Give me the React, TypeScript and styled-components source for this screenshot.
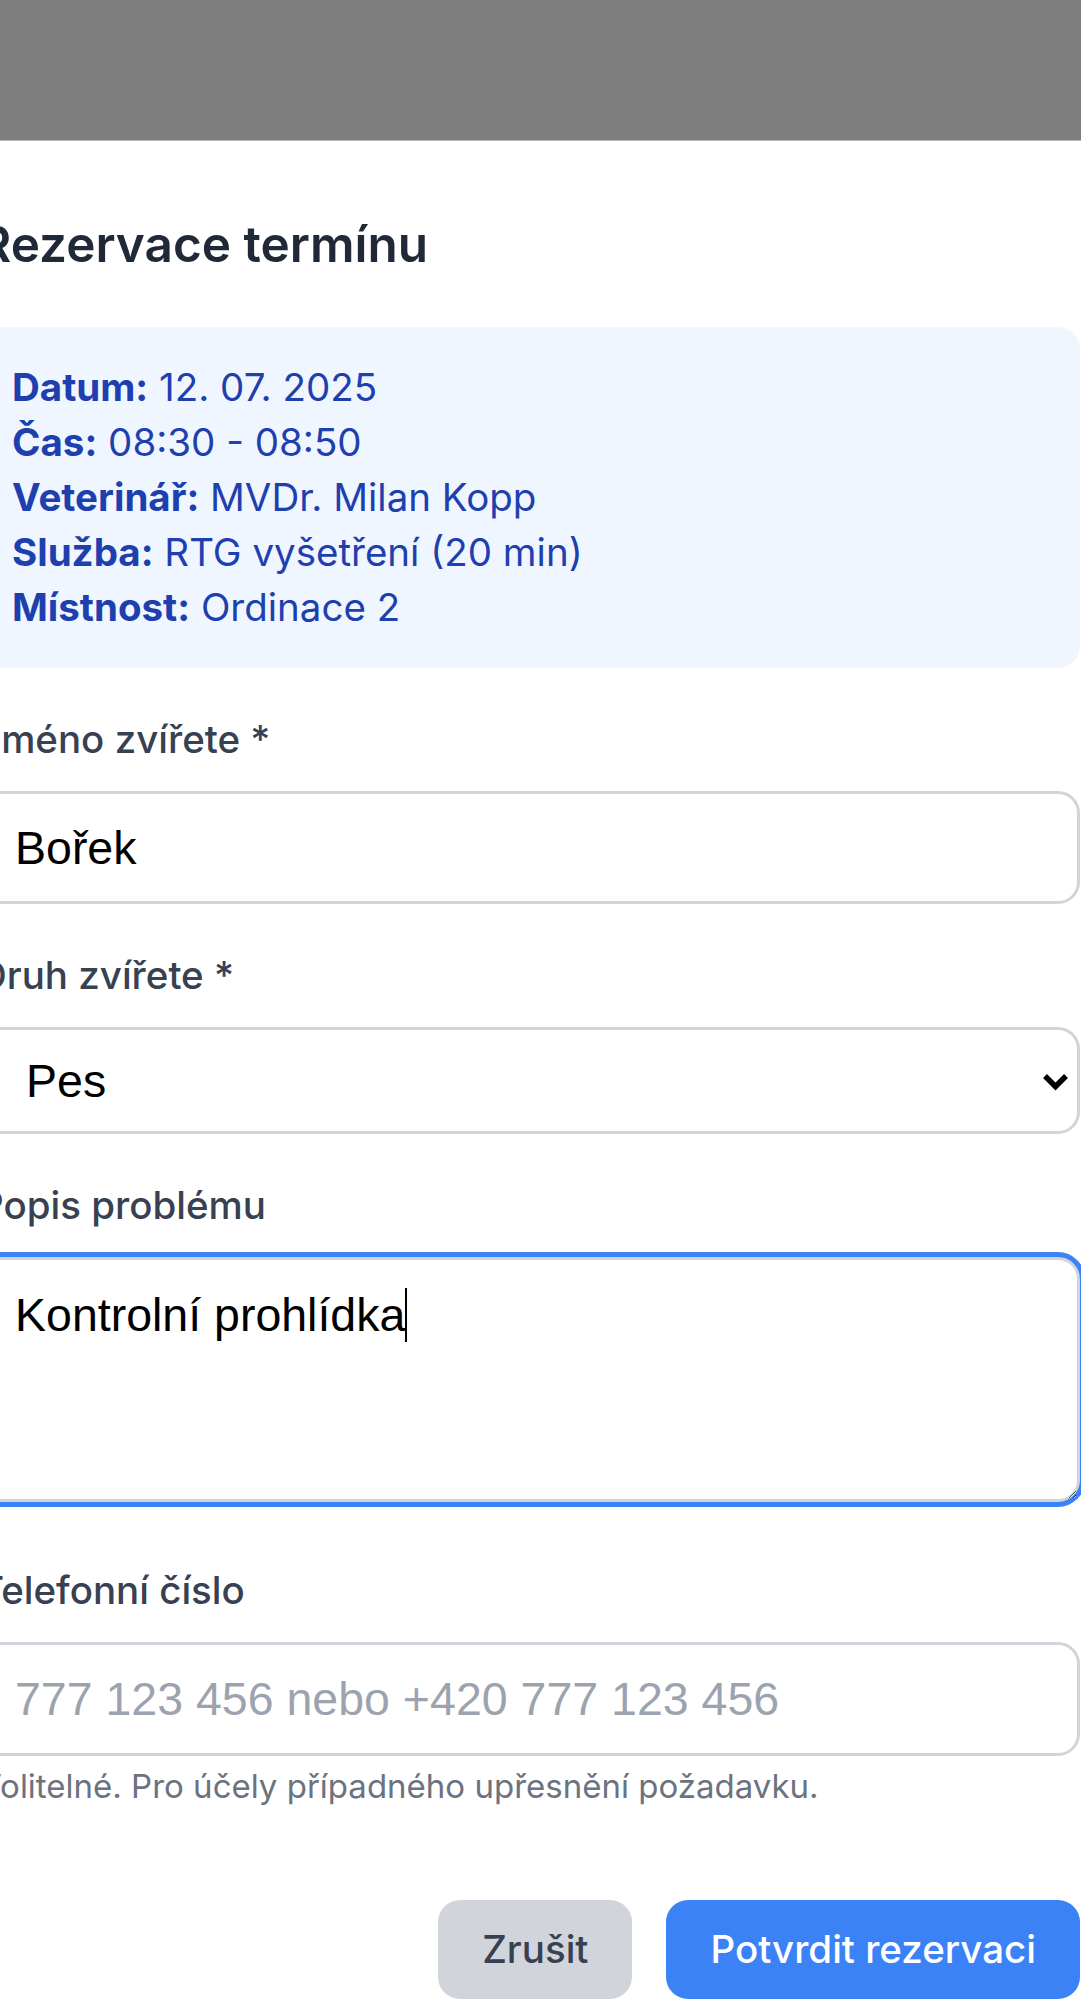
import React from "react";
import styled, { createGlobalStyle } from "styled-components";

const GlobalStyle = createGlobalStyle`
  html, body {
    margin: 0;
    padding: 0;
    background: #ffffff;
  }
  body {
    font-family: Inter, "Noto Sans", sans-serif;
    overflow: hidden;
  }
  * { box-sizing: border-box; }
`;

const Screen = styled.div`
  width: 1081px;
  height: 1999px;
  overflow: hidden;
  background: #ffffff;
  display: flex;
  flex-direction: column;
`;

const Backdrop = styled.div`
  height: 141px;
  flex: none;
  display: flex;
  border-bottom: 1px solid #b9b9b9;
`;

const BackdropPane = styled.div<{ $tone: string; $w?: number }>`
  background: ${(p) => p.$tone};
  ${(p) => (p.$w ? `width: ${p.$w}px; flex: none;` : "flex: 1;")}
`;

const Modal = styled.div`
  margin-left: -21px;
  width: 1101px;
  padding-top: 65px;
  display: flex;
  flex-direction: column;
  font-family: Inter, "Noto Sans", sans-serif;
`;

const Title = styled.h2`
  margin: 0 0 44px;
  font-size: 49.5px;
  line-height: 77px;
  font-weight: 600;
  color: #1f2937;
`;

const InfoBox = styled.div`
  background: #eff6ff;
  border-radius: 22px;
  padding: 33px;
  margin-bottom: 44px;
  color: #1e40af;
  font-size: 38.5px;
  line-height: 55px;
`;

const InfoLine = styled.div`
  white-space: nowrap;
  strong {
    font-weight: 700;
  }
`;

const Field = styled.div<{ $after?: number }>`
  display: flex;
  flex-direction: column;
  margin-bottom: ${(p) => p.$after ?? 44}px;
`;

const Label = styled.label`
  display: block;
  font-size: 38.5px;
  line-height: 55px;
  font-weight: 500;
  color: #374151;
  margin-bottom: 24px;
  white-space: nowrap;
`;

const controlBase = `
  width: 100%;
  border: 3px solid #d1d5db;
  border-radius: 22px;
  background: #ffffff;
  color: #000000;
  font-family: "Liberation Sans", Arial, sans-serif;
  font-size: 46.5px;
  outline: none;
  margin: 0;
`;

const TextInput = styled.input<{ $h: number }>`
  ${controlBase}
  height: ${(p) => p.$h}px;
  padding: 0 33px;
  &::placeholder {
    color: #9ca3af;
    opacity: 1;
  }
`;

const SelectWrap = styled.div`
  position: relative;
  width: 100%;
`;

const Select = styled.select`
  ${controlBase}
  height: 107px;
  padding: 0 60px 0 44px;
  appearance: none;
  -webkit-appearance: none;
  display: block;
`;

const Chevron = styled.svg`
  position: absolute;
  right: 11px;
  top: 45px;
  width: 27px;
  height: 19px;
  pointer-events: none;
`;

const AreaWrap = styled.div`
  position: relative;
  width: 100%;
`;

const TextArea = styled.textarea<{ $focused?: boolean }>`
  ${controlBase}
  display: block;
  height: 245px;
  padding: 22px 33px;
  line-height: 66px;
  resize: vertical;
  box-shadow: ${(p) => (p.$focused ? "0 0 0 5px #3b82f6" : "none")};
`;

const Caret = styled.span`
  position: absolute;
  left: 426px;
  top: 31px;
  width: 2px;
  height: 54px;
  background: #000000;
`;

const Helper = styled.p`
  margin: 8px 0 0;
  font-size: 33px;
  line-height: 44px;
  color: #6b7280;
  white-space: nowrap;
`;

const Actions = styled.div`
  margin-top: 92px;
  display: flex;
  justify-content: flex-end;
  gap: 34px;
`;

const Button = styled.button<{ $variant: "primary" | "secondary" }>`
  border: none;
  border-radius: 22px;
  padding: 22px 44px;
  height: 99px;
  font-family: Inter, "Noto Sans", sans-serif;
  font-size: 38.5px;
  line-height: 55px;
  font-weight: 500;
  white-space: nowrap;
  background: ${(p) => (p.$variant === "primary" ? "#3b82f6" : "#d1d5db")};
  color: ${(p) => (p.$variant === "primary" ? "#ffffff" : "#374151")};
`;

const info: [string, string][] = [
  ["Datum:", "12. 07. 2025"],
  ["Čas:", "08:30 - 08:50"],
  ["Veterinář:", "MVDr. Milan Kopp"],
  ["Služba:", "RTG vyšetření (20 min)"],
  ["Místnost:", "Ordinace 2"],
];

export default function App() {
  return (
    <>
      <GlobalStyle />
      <Screen>
        <Backdrop>
          <BackdropPane $tone="#7d7e7d" $w={898} />
          <BackdropPane $tone="#7f7f7f" />
        </Backdrop>
        <Modal>
          <Title>Rezervace termínu</Title>
          <InfoBox>
            {info.map(([k, v]) => (
              <InfoLine key={k}>
                <strong>{k}</strong> {v}
              </InfoLine>
            ))}
          </InfoBox>

          <Field>
            <Label>Jméno zvířete *</Label>
            <TextInput $h={113} value="Bořek" readOnly />
          </Field>

          <Field>
            <Label>Druh zvířete *</Label>
            <SelectWrap>
              <Select value="pes" onChange={() => {}}>
                <option value="pes">Pes</option>
                <option value="kocka">Kočka</option>
              </Select>
              <Chevron viewBox="0 0 27 19">
                <polyline
                  points="3,4 13.5,14.5 24,4"
                  fill="none"
                  stroke="#000"
                  strokeWidth="5.5"
                  strokeLinejoin="miter"
                />
              </Chevron>
            </SelectWrap>
          </Field>

          <Field $after={61}>
            <Label>Popis problému</Label>
            <AreaWrap>
              <TextArea $focused value="Kontrolní prohlídka" readOnly />
              <Caret />
            </AreaWrap>
          </Field>

          <Field $after={0}>
            <Label>Telefonní číslo</Label>
            <TextInput $h={114} placeholder="777 123 456 nebo +420 777 123 456" />
            <Helper>Volitelné. Pro účely případného upřesnění požadavku.</Helper>
          </Field>

          <Actions>
            <Button $variant="secondary">Zrušit</Button>
            <Button $variant="primary">Potvrdit rezervaci</Button>
          </Actions>
        </Modal>
      </Screen>
    </>
  );
}
